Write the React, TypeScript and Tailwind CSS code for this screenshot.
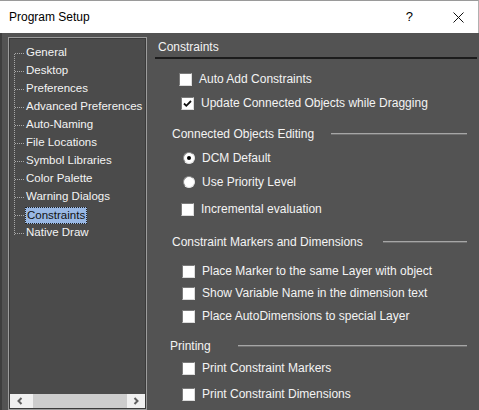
import React from 'react';

const treeItems = [
  'General',
  'Desktop',
  'Preferences',
  'Advanced Preferences',
  'Auto-Naming',
  'File Locations',
  'Symbol Libraries',
  'Color Palette',
  'Warning Dialogs',
  'Constraints',
  'Native Draw',
];

function CheckBox({ checked }: { checked?: boolean }) {
  return (
    <div className="flex h-[13px] w-[13px] shrink-0 items-center justify-center border border-t-[#7a7a7a] border-l-[#7a7a7a] border-b-[#dcdcdc] border-r-[#dcdcdc] bg-white">
      {checked && (
        <svg width="9" height="9" viewBox="0 0 9 9">
          <path d="M1 4.5 L3.3 6.8 L8 2" stroke="#111" strokeWidth="1.8" fill="none" />
        </svg>
      )}
    </div>
  );
}

function Radio({ checked }: { checked?: boolean }) {
  return (
    <div className="flex h-[12px] w-[12px] shrink-0 items-center justify-center rounded-full border border-t-[#8a8a8a] border-l-[#8a8a8a] border-b-[#e6e6e6] border-r-[#e6e6e6] bg-white">
      {checked && <div className="h-[4px] w-[4px] rounded-full bg-black"></div>}
    </div>
  );
}

function Row({ h, mt, ml, children, label }: { h: number; mt: number; ml: number; children: React.ReactNode; label: string }) {
  return (
    <div className="flex items-center" style={{ height: h, marginTop: mt, paddingLeft: ml }}>
      {children}
      <span className="ml-[7px] whitespace-nowrap">{label}</span>
    </div>
  );
}

function GroupLabel({ mt, ml, gap, label }: { mt: number; ml: number; gap: number; label: string }) {
  return (
    <div className="flex h-[20px] items-center pr-[12px]" style={{ marginTop: mt, paddingLeft: ml }}>
      <span className="whitespace-nowrap">{label}</span>
      <div className="h-[2px] flex-1 border-t border-t-[#a6a6a6] border-b border-b-[#707070]" style={{ marginLeft: gap }}></div>
    </div>
  );
}

export default function App() {
  return (
    <div
      className="flex h-[410px] w-[479px] flex-col overflow-hidden bg-[#535353] text-[11.5px] text-[#f4f4f4]"
      style={{ fontFamily: '"Liberation Sans", Arial, sans-serif' }}
    >
      {/* title bar */}
      <div className="flex h-[33px] shrink-0 items-center border-t border-t-[#9a9a9a] border-r border-r-[#b0b0b0] bg-white text-[12px] text-black">
        <span className="ml-[9px]">Program Setup</span>
        <span className="ml-auto mr-[40px] text-[13px]">?</span>
        <svg className="mr-[14px]" width="11" height="11" viewBox="0 0 11 11">
          <path d="M0.5 0.5 L10.5 10.5 M10.5 0.5 L0.5 10.5" stroke="#111" strokeWidth="1" />
        </svg>
      </div>

      <div className="flex flex-1 border-l-2 border-l-[#3e3e3e]">
        {/* tree */}
        <div className="ml-[6px] mt-[4px] flex w-[139px] shrink-0 flex-col border border-[#9c9c9c] bg-[#4b4b4b]">
          <div className="relative flex-1 border border-[#3a3a3a] pt-[5px]">
            <div className="absolute left-[4px] top-[15px] h-[181px] border-l border-dotted border-l-[#a8a8a8]"></div>
            {treeItems.map((t) => (
              <div key={t} className="flex h-[18px] items-center">
                <div className="ml-[5px] w-[9px] border-t border-dotted border-t-[#a8a8a8]"></div>
                {t === 'Constraints' ? (
                  <span className="ml-[1px] border border-dotted border-[#222] bg-[#99b8e4] px-[1px] leading-[15px] text-[#111]">{t}</span>
                ) : (
                  <span className="ml-[2px] whitespace-nowrap">{t}</span>
                )}
              </div>
            ))}
            <div className="absolute bottom-0 left-0 right-0 flex h-[14px] items-center bg-[#f0f0f0]">
              <svg className="ml-[6px]" width="8" height="8" viewBox="0 0 8 8">
                <path d="M5.5 1 L2.5 4 L5.5 7" stroke="#606060" strokeWidth="2" fill="none" />
              </svg>
              <div className="ml-[9px] h-full w-[94px] bg-[#cdcdcd]"></div>
              <svg className="ml-[5px]" width="8" height="8" viewBox="0 0 8 8">
                <path d="M2.5 1 L5.5 4 L2.5 7" stroke="#606060" strokeWidth="2" fill="none" />
              </svg>
            </div>
          </div>
        </div>

        {/* settings */}
        <div className="ml-[8px] flex flex-1 flex-col text-[12px]">
          <div className="mt-[5px] flex h-[18px] items-center pl-[3px]">Constraints</div>
          <div className="mr-[2px] mt-[1px] h-[2px] bg-[#1c1c1c]"></div>

          <Row h={24} mt={8} ml={24} label="Auto Add Constraints">
            <CheckBox />
          </Row>
          <Row h={24} mt={0} ml={26} label="Update Connected Objects while Dragging">
            <CheckBox checked />
          </Row>

          <GroupLabel mt={9} ml={17} gap={17} label="Connected Objects Editing" />
          <Row h={24} mt={2} ml={28} label="DCM Default">
            <Radio checked />
          </Row>
          <Row h={24} mt={0} ml={28} label="Use Priority Level">
            <Radio />
          </Row>
          <Row h={24} mt={3} ml={26} label="Incremental evaluation">
            <CheckBox />
          </Row>

          <GroupLabel mt={11} ml={17} gap={20} label="Constraint Markers and Dimensions" />
          <Row h={22} mt={8} ml={27} label="Place Marker to the same Layer with object">
            <CheckBox />
          </Row>
          <Row h={22} mt={0} ml={27} label="Show Variable Name in the dimension text">
            <CheckBox />
          </Row>
          <Row h={22} mt={1} ml={27} label="Place AutoDimensions to special Layer">
            <CheckBox />
          </Row>

          <GroupLabel mt={9} ml={15} gap={27} label="Printing" />
          <Row h={24} mt={0} ml={27} label="Print Constraint Markers">
            <CheckBox />
          </Row>
          <Row h={24} mt={2} ml={27} label="Print Constraint Dimensions">
            <CheckBox />
          </Row>
        </div>
      </div>
    </div>
  );
}
